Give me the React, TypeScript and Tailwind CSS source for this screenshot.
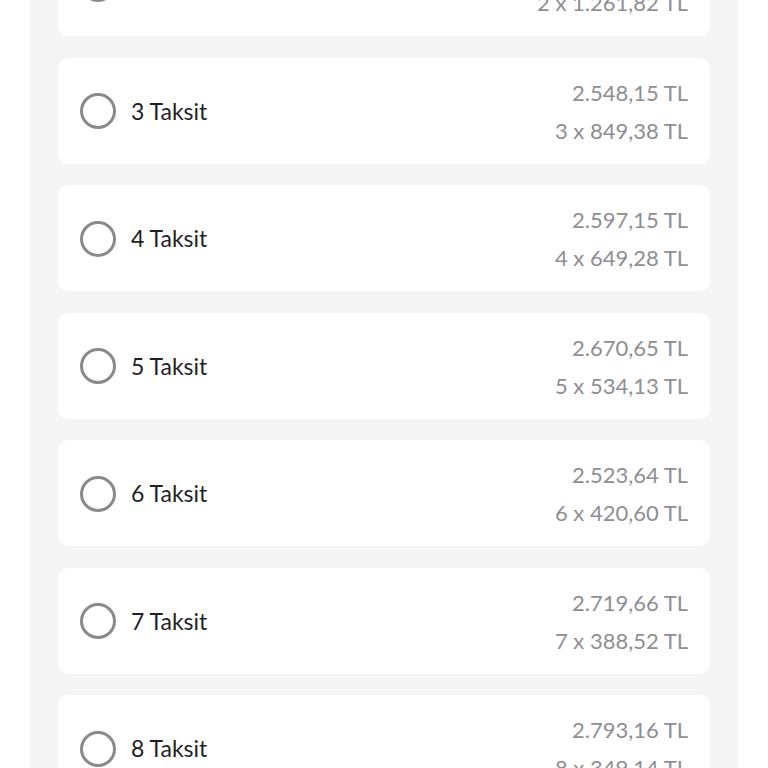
import React from "react";

type Option = { count: number; total: string; monthly: string };

const options: Option[] = [
  { count: 2, total: "2.523,64 TL", monthly: "2 x 1.261,82 TL" },
  { count: 3, total: "2.548,15 TL", monthly: "3 x 849,38 TL" },
  { count: 4, total: "2.597,15 TL", monthly: "4 x 649,28 TL" },
  { count: 5, total: "2.670,65 TL", monthly: "5 x 534,13 TL" },
  { count: 6, total: "2.523,64 TL", monthly: "6 x 420,60 TL" },
  { count: 7, total: "2.719,66 TL", monthly: "7 x 388,52 TL" },
  { count: 8, total: "2.793,16 TL", monthly: "8 x 349,14 TL" },
];

function InstallmentRow({ option }: { option: Option }) {
  return (
    <label className="flex items-center justify-between bg-white rounded-[10px] pl-[22px] pr-[22px] pt-[16px] pb-[14px] cursor-pointer">
      <div className="flex items-center gap-[15px] mt-[-1px]">
        <span className="w-[36px] h-[36px] rounded-full border-[3px] border-[#8a8a8e] bg-white" />
        <span className="text-[23px] text-[#1f1f28]">{option.count} Taksit</span>
      </div>
      <div className="flex flex-col items-end text-[22px] text-[#8e8e93] leading-[38px]">
        <span>{option.total}</span>
        <span>{option.monthly}</span>
      </div>
    </label>
  );
}

export default function App() {
  return (
    <div
      className="w-[768px] h-[768px] overflow-hidden bg-white px-[30px]"
      style={{ fontFamily: "Lato, 'Open Sans', sans-serif" }}
    >
      <div className="h-full flex flex-col bg-[#f5f5f5] px-[28px]">
        <div className="flex flex-col gap-[21.5px] mt-[-70px]">
          {options.map((o) => (
            <InstallmentRow key={o.count} option={o} />
          ))}
        </div>
      </div>
    </div>
  );
}
